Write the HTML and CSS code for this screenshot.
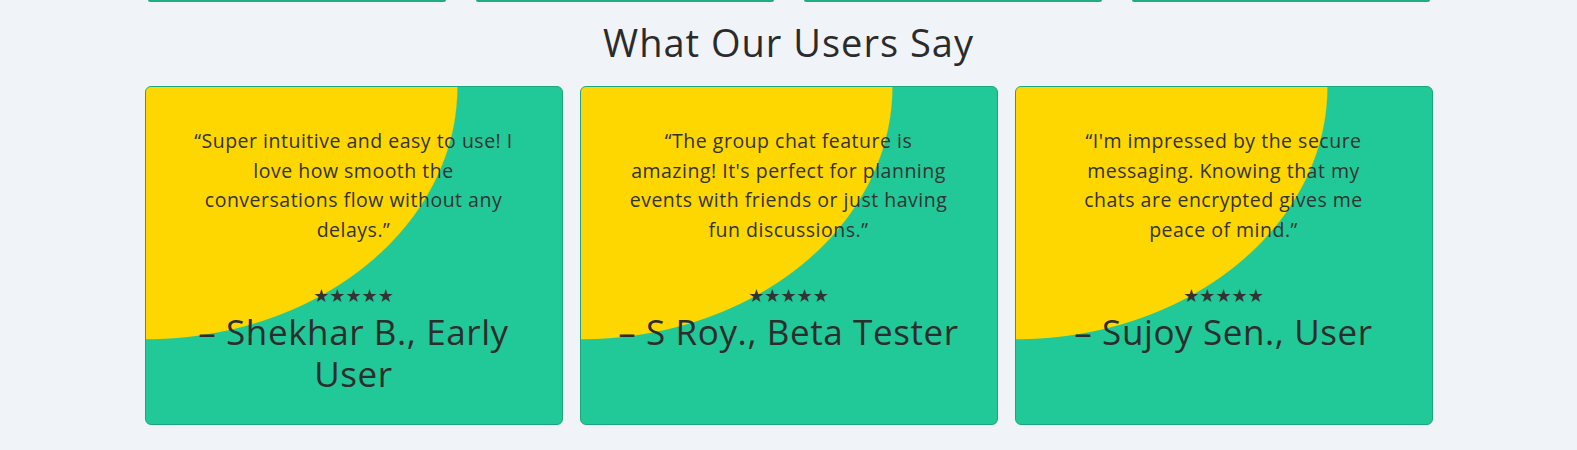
FILE: index.html
```html
<!DOCTYPE html>
<html lang="en">
<head>
<meta charset="utf-8">
<title>What Our Users Say</title>
<link rel="stylesheet" href="styles.css">
</head>
<body>
<div class="prev-strip">
  <div class="stub"></div>
  <div class="stub"></div>
  <div class="stub"></div>
  <div class="stub"></div>
</div>
<section class="testimonials">
  <h2 class="section-title">What Our Users Say</h2>
  <div class="cards">
    <article class="card">
      <p class="quote">“Super intuitive and easy to use! I<br>love how smooth the<br>conversations flow without any<br>delays.”</p>
      <div class="stars">★★★★★</div>
      <h3 class="author">– Shekhar B., Early User</h3>
    </article>
    <article class="card">
      <p class="quote">“The group chat feature is<br>amazing! It's perfect for planning<br>events with friends or just having<br>fun discussions.”</p>
      <div class="stars">★★★★★</div>
      <h3 class="author">– S Roy., Beta Tester</h3>
    </article>
    <article class="card">
      <p class="quote">“I'm impressed by the secure<br>messaging. Knowing that my<br>chats are encrypted gives me<br>peace of mind.”</p>
      <div class="stars">★★★★★</div>
      <h3 class="author">– Sujoy Sen., User</h3>
    </article>
  </div>
</section>
</body>
</html>
```
FILE: styles.css
```css
* { box-sizing: border-box; }

body {
  margin: 0;
  background: #f0f4f8;
  font-family: "Open Sans", "Noto Sans", sans-serif;
  color: #333333;
}

.prev-strip {
  display: flex;
  justify-content: center;
  gap: 30px;
}

.stub {
  width: 298px;
  height: 2px;
  background: #1fae7f;
  border-radius: 0 0 4px 4px;
}

.section-title {
  margin: 19px 0 22px;
  font-size: 38px;
  line-height: 43px;
  font-weight: 500;
  letter-spacing: 1px;
  text-align: center;
  color: #2b2b2b;
}

.cards {
  max-width: 1288px;
  margin: 0 auto;
  display: grid;
  grid-template-columns: repeat(3, 1fr);
  gap: 17px;
}

.card {
  background: radial-gradient(75% 75% at 0% 0%, #ffd700 99.6%, #20c997 100%);
  border: 1px solid #1ba77d;
  border-radius: 6px;
  padding: 39px 30px 30px;
  text-align: center;
}

.quote {
  margin: 0 0 38px;
  font-size: 19.5px;
  line-height: 29.5px;
  letter-spacing: 0.5px;
  color: #333333;
}

.stars {
  padding-bottom: 2px;
  font-family: "DejaVu Sans", sans-serif;
  font-size: 18px;
  line-height: 27px;
  color: #333333;
}

.author {
  margin: 0;
  font-size: 35px;
  line-height: 41.5px;
  font-weight: 500;
  letter-spacing: 0.6px;
  color: #2d2d2d;
}
```
